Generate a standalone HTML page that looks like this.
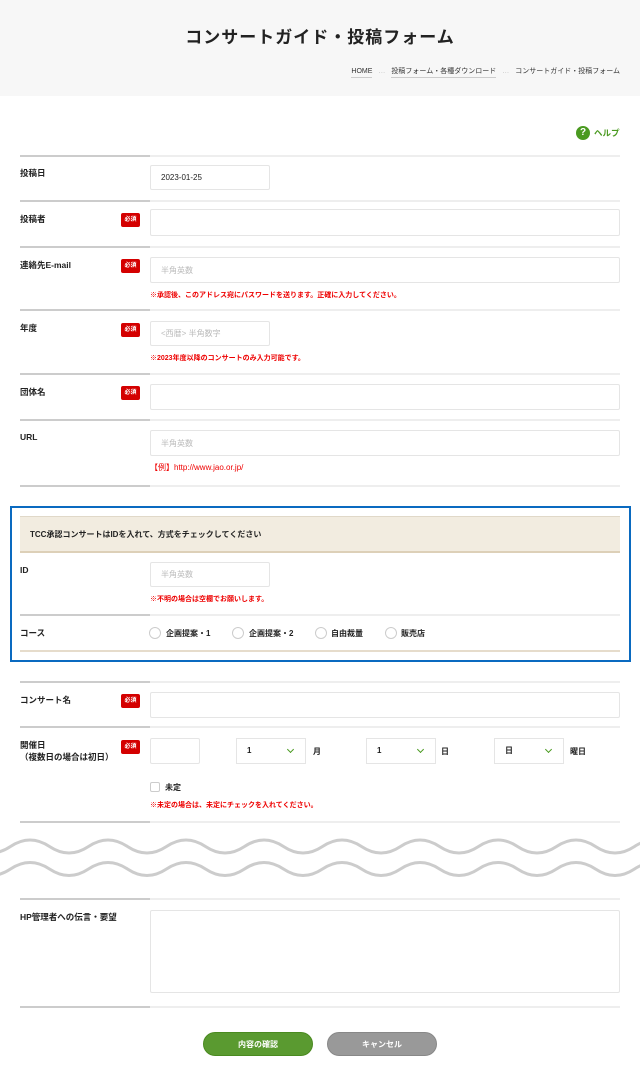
<!DOCTYPE html>
<html><head><meta charset="utf-8"><style>
*{margin:0;padding:0;box-sizing:border-box}
body{width:640px;height:1085px;position:relative;background:#fff;font-family:"Liberation Sans","Noto Sans CJK JP",sans-serif;color:#222;overflow:hidden}
.a{position:absolute}
.hdr{left:0;top:0;width:640px;height:96px;background:#f7f7f7}
.ln{position:absolute;left:20px;width:600px;height:2px;background:#eee}
.ln:before{content:"";position:absolute;left:0;top:0;width:130px;height:2px;background:#ccc}
.lb{position:absolute;left:20px;font-size:8.5px;font-weight:bold;line-height:12px}
.bd{position:absolute;left:121px;width:19px;height:14px;background:#d40000;color:#fff;font-size:6px;font-weight:bold;text-align:center;line-height:14px;border-radius:2px}
.in{position:absolute;border:1px solid #e5e5e5;border-radius:2px;background:#fff;font-size:8px;color:#bbb;padding-left:10px;display:flex;align-items:center}
.nt{position:absolute;left:150px;font-size:7px;color:#e00;font-weight:bold}
.rd{position:absolute;width:12px;height:12px;border:1px solid #ccc;border-radius:50%;top:627px}
.rt{position:absolute;top:628px;font-size:8px;font-weight:bold}
.sel{position:absolute;top:738px;width:70px;height:26px;border:1px solid #e5e5e5;font-size:8px;padding-left:10px;line-height:24px;font-weight:bold}
.sel i{position:absolute;right:12px;top:8px;width:5px;height:5px;border-right:1.5px solid #4a9a20;border-bottom:1.5px solid #4a9a20;transform:rotate(45deg)}
.btn{position:absolute;top:1032px;width:110px;height:24px;border-radius:12px;color:#fff;font-size:8px;font-weight:bold;text-align:center;line-height:24px}
</style></head><body>
<div class="a hdr"></div>
<div class="a" style="left:0;width:640px;top:23px;text-align:center;font-size:17px;font-weight:bold;letter-spacing:1px">コンサートガイド・投稿フォーム</div>
<div class="a" style="right:20px;top:66px;font-size:7px;color:#333;white-space:nowrap">
<span style="border-bottom:1px solid #ccc;padding-bottom:2px">HOME</span><span style="color:#bbb;margin:0 6px">…</span><span style="border-bottom:1px solid #ccc;padding-bottom:2px">投稿フォーム・各種ダウンロード</span><span style="color:#bbb;margin:0 6px">…</span>コンサートガイド・投稿フォーム</div>
<div class="a" style="left:576px;top:126px;width:14px;height:14px;border-radius:50%;background:#4a9a20;color:#fff;font-size:10px;font-weight:bold;text-align:center;line-height:14px">?</div>
<div class="a" style="left:594px;top:127px;font-size:8.5px;font-weight:bold;color:#4a9a20">ヘルプ</div>

<div class="ln" style="top:155px"></div>
<div class="lb" style="top:167px">投稿日</div>
<div class="in" style="left:150px;top:165px;width:120px;height:25px;color:#222">2023-01-25</div>

<div class="ln" style="top:200px"></div>
<div class="lb" style="top:213px">投稿者</div><div class="bd" style="top:213px">必須</div>
<div class="in" style="left:150px;top:209px;width:470px;height:27px"></div>

<div class="ln" style="top:246px"></div>
<div class="lb" style="top:259px">連絡先E-mail</div><div class="bd" style="top:259px">必須</div>
<div class="in" style="left:150px;top:257px;width:470px;height:26px">半角英数</div>
<div class="nt" style="top:290px">※承認後、このアドレス宛にパスワードを送ります。正確に入力してください。</div>

<div class="ln" style="top:309px"></div>
<div class="lb" style="top:322px">年度</div><div class="bd" style="top:323px">必須</div>
<div class="in" style="left:150px;top:321px;width:120px;height:25px">&lt;西暦&gt; 半角数字</div>
<div class="nt" style="top:353px">※2023年度以降のコンサートのみ入力可能です。</div>

<div class="ln" style="top:373px"></div>
<div class="lb" style="top:386px">団体名</div><div class="bd" style="top:386px">必須</div>
<div class="in" style="left:150px;top:384px;width:470px;height:26px"></div>

<div class="ln" style="top:419px"></div>
<div class="lb" style="top:431px">URL</div>
<div class="in" style="left:150px;top:430px;width:470px;height:26px">半角英数</div>
<div class="a" style="left:150px;top:462px;font-size:8px;color:#e00">【例】http://www.jao.or.jp/</div>
<div class="ln" style="top:485px"></div>

<div class="a" style="left:10px;top:506px;width:621px;height:156px;border:2px solid #0a6ac0"></div>
<div class="a" style="left:20px;top:516px;width:600px;height:37px;background:#f2ece0;border-top:1px solid #e0d8c8;border-bottom:2px solid #ddd0b8"></div>
<div class="a" style="left:30px;top:529px;font-size:8px;font-weight:bold">TCC承認コンサートはIDを入れて、方式をチェックしてください</div>
<div class="lb" style="top:564px">ID</div>
<div class="in" style="left:150px;top:562px;width:120px;height:25px">半角英数</div>
<div class="nt" style="top:594px">※不明の場合は空欄でお願いします。</div>
<div class="ln" style="top:614px"></div>
<div class="lb" style="top:627px">コース</div>
<div class="rd" style="left:149px"></div><div class="rt" style="left:166px">企画提案・1</div>
<div class="rd" style="left:232px"></div><div class="rt" style="left:249px">企画提案・2</div>
<div class="rd" style="left:315px"></div><div class="rt" style="left:331px">自由裁量</div>
<div class="rd" style="left:385px"></div><div class="rt" style="left:401px">販売店</div>
<div class="a" style="left:20px;top:650px;width:600px;height:2px;background:#e6dccb"></div>

<div class="ln" style="top:681px"></div>
<div class="lb" style="top:694px">コンサート名</div><div class="bd" style="top:694px">必須</div>
<div class="in" style="left:150px;top:692px;width:470px;height:26px"></div>

<div class="ln" style="top:726px"></div>
<div class="lb" style="top:739px">開催日<br>（複数日の場合は初日）</div><div class="bd" style="top:740px">必須</div>
<div class="in" style="left:150px;top:738px;width:50px;height:26px"></div>
<div class="sel" style="left:236px">1<i></i></div><div class="rt" style="left:313px;top:746px">月</div>
<div class="sel" style="left:366px">1<i></i></div><div class="rt" style="left:441px;top:746px">日</div>
<div class="sel" style="left:494px">日<i></i></div><div class="rt" style="left:570px;top:746px">曜日</div>
<div class="a" style="left:150px;top:782px;width:10px;height:10px;border:1px solid #ccc;border-radius:2px"></div>
<div class="rt" style="left:165px;top:782px">未定</div>
<div class="nt" style="top:800px">※未定の場合は、未定にチェックを入れてください。</div>
<div class="ln" style="top:821px"></div>

<svg class="a" style="left:0;top:830px" width="640" height="60" viewBox="0 0 640 60">
<path d="M-67.5 16.5 q19.5 -13 39 0 t39 0 t39 0 t39 0 t39 0 t39 0 t39 0 t39 0 t39 0 t39 0 t39 0 t39 0 t39 0 t39 0 t39 0 t39 0 t39 0 t39 0 t39 0 t39 0" fill="none" stroke="#ccc" stroke-width="3"/>
<path d="M-67.5 39 q19.5 -13 39 0 t39 0 t39 0 t39 0 t39 0 t39 0 t39 0 t39 0 t39 0 t39 0 t39 0 t39 0 t39 0 t39 0 t39 0 t39 0 t39 0 t39 0 t39 0 t39 0" fill="none" stroke="#ccc" stroke-width="3"/>
</svg>

<div class="ln" style="top:898px"></div>
<div class="lb" style="top:911px">HP管理者への伝言・要望</div>
<div class="in" style="left:150px;top:910px;width:470px;height:83px"></div>
<div class="ln" style="top:1006px;height:2px"></div>

<div class="btn" style="left:203px;background:#5a9a30;border:1px solid #4a8a20">内容の確認</div>
<div class="btn" style="left:327px;background:#999;border:1px solid #888">キャンセル</div>
</body></html>
